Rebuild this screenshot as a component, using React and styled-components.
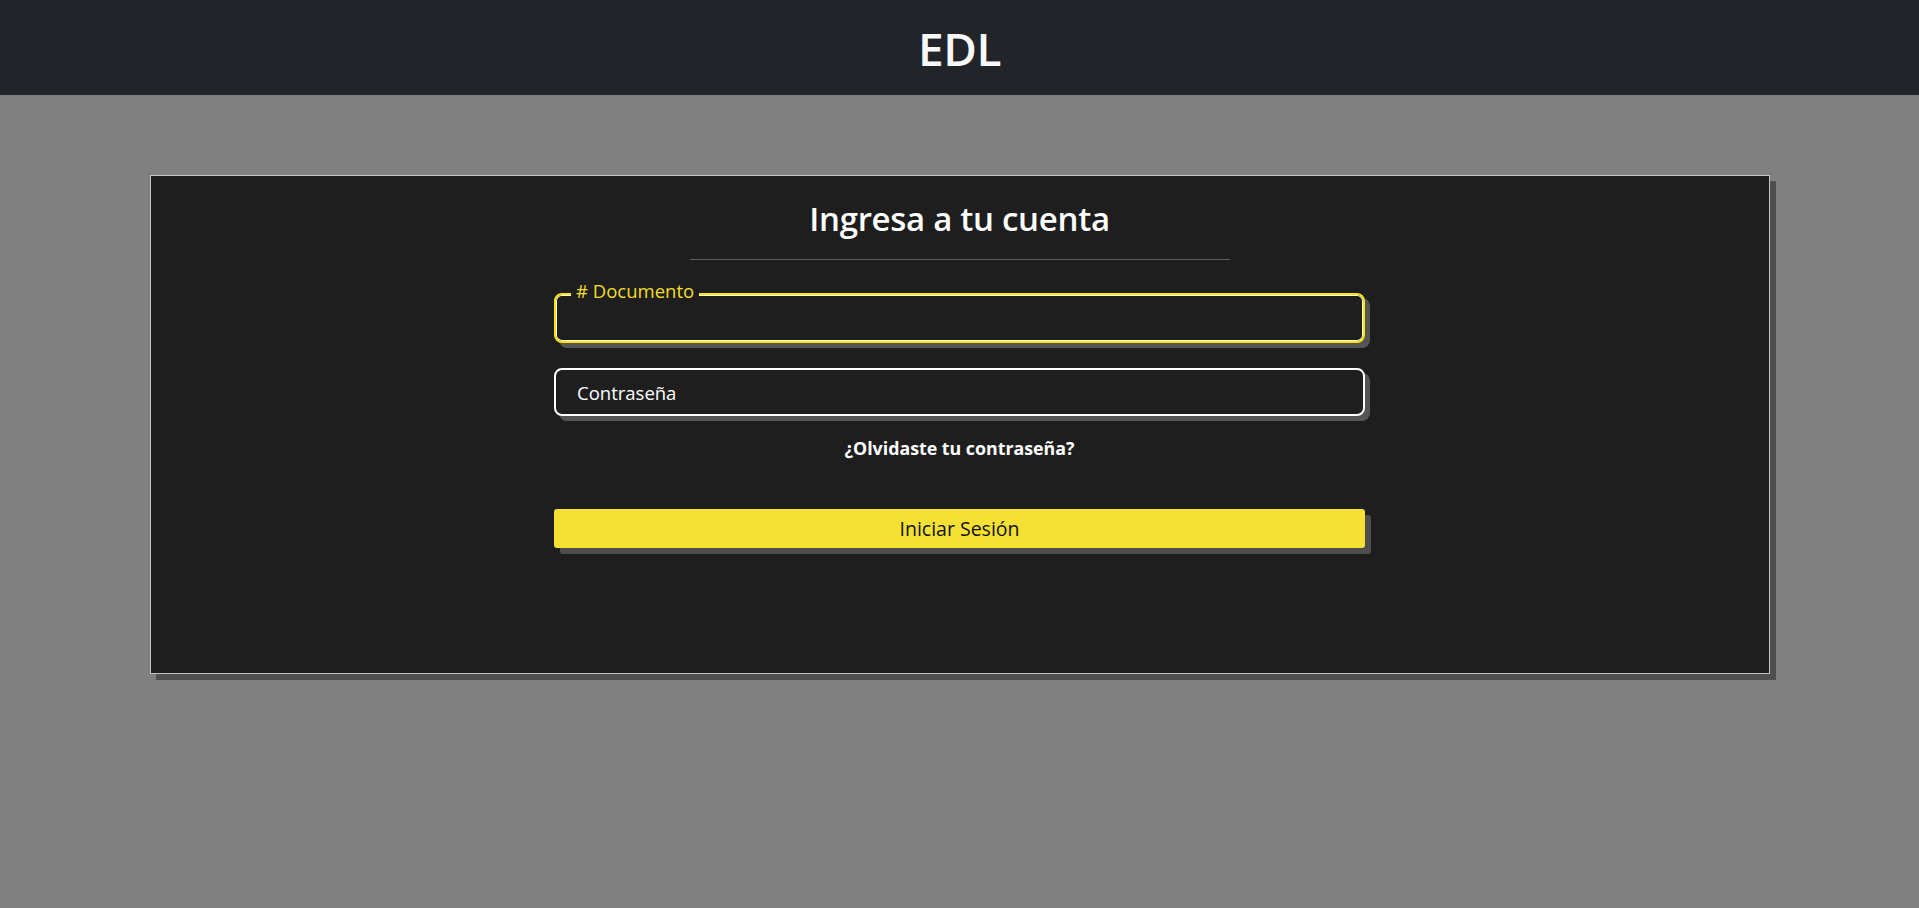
import React, { useState } from 'react';
import styled, { createGlobalStyle } from 'styled-components';

const GlobalStyle = createGlobalStyle`
  * { box-sizing: border-box; }
  body {
    margin: 0;
    background: #808080;
    font-family: "Open Sans", "Noto Sans", sans-serif;
  }
`;

const Page = styled.div`
  min-height: 100vh;
  background: #808080;
`;

const Header = styled.header`
  height: 95px;
  background: #212529;
  display: flex;
  align-items: center;
  justify-content: center;
`;

const Brand = styled.h1`
  margin: 0;
  color: #f8f9fa;
  font-size: 46px;
  font-weight: 600;
  letter-spacing: -0.5px;
`;

const Card = styled.section`
  width: 1620px;
  margin: 80px auto 0;
  background: #1e1e1e;
  border: 1px solid #c4c4c4;
  box-shadow: 6px 6px 0 #4f4f4f;
  padding: 21px 0 125px;
  display: flex;
  flex-direction: column;
  align-items: center;
`;

const Title = styled.h2`
  margin: 0;
  color: #ffffff;
  font-size: 33px;
  font-weight: 600;
  line-height: 43px;
  letter-spacing: -0.3px;
`;

const Divider = styled.hr`
  width: 540px;
  margin: 19px 0 0;
  border: none;
  border-top: 1px solid #5e5e5e;
`;

const Form = styled.form`
  width: 811px;
  margin-top: 33px;
  display: flex;
  flex-direction: column;
`;

const Field = styled.div`
  position: relative;
  margin-bottom: ${p => p.$gap || 0}px;
`;

const Input = styled.input`
  display: block;
  width: 100%;
  height: ${p => (p.$active ? 50 : 48)}px;
  padding: 0 21px;
  background: #1e1e1e;
  color: #ffffff;
  font-family: inherit;
  font-size: 18.5px;
  border-radius: 8px;
  border: 2px solid ${p => (p.$active ? '#ffe500' : '#ffffff')};
  box-shadow: ${p => (p.$active ? 'inset 0 0 0 1px #ffffff, ' : '')}5px 5px 0 #555555;
  outline: none;

  &::placeholder {
    color: #ffffff;
  }
`;

const Label = styled.label`
  position: absolute;
  left: 17px;
  top: -13px;
  padding: 0 5px;
  background: #1e1e1e;
  color: #f4df28;
  font-size: 18.5px;
  line-height: 22px;
`;

const Forgot = styled.a`
  align-self: center;
  margin-top: 20px;
  color: #ffffff;
  font-size: 17.8px;
  font-weight: 700;
  line-height: 24px;
  text-decoration: none;
  cursor: pointer;
`;

const Button = styled.button`
  margin-top: 49px;
  height: 39px;
  border: none;
  border-radius: 3px;
  background: #f5e133;
  color: #111111;
  font-family: inherit;
  font-size: 19.5px;
  box-shadow: 6px 6px 0 #4d4d4d;
  cursor: pointer;
`;

const App = () => {
  const [form, setForm] = useState({ documento: '', password: '' });

  const handleChange = (event) => {
    const { name, value } = event.target;
    setForm({ ...form, [name]: value });
  };

  return (
    <Page>
      <GlobalStyle />
      <Header>
        <Brand>EDL</Brand>
      </Header>
      <Card>
        <Title>Ingresa a tu cuenta</Title>
        <Divider />
        <Form onSubmit={(e) => e.preventDefault()}>
          <Field $gap={25}>
            <Label htmlFor='documento'># Documento</Label>
            <Input
              id='documento'
              name='documento'
              type='text'
              $active
              value={form.documento}
              onChange={handleChange} />
          </Field>
          <Field>
            <Input
              name='password'
              type='password'
              placeholder='Contraseña'
              value={form.password}
              onChange={handleChange} />
          </Field>
          <Forgot>¿Olvidaste tu contraseña?</Forgot>
          <Button type='submit'>Iniciar Sesión</Button>
        </Form>
      </Card>
    </Page>
  );
};

export default App;
